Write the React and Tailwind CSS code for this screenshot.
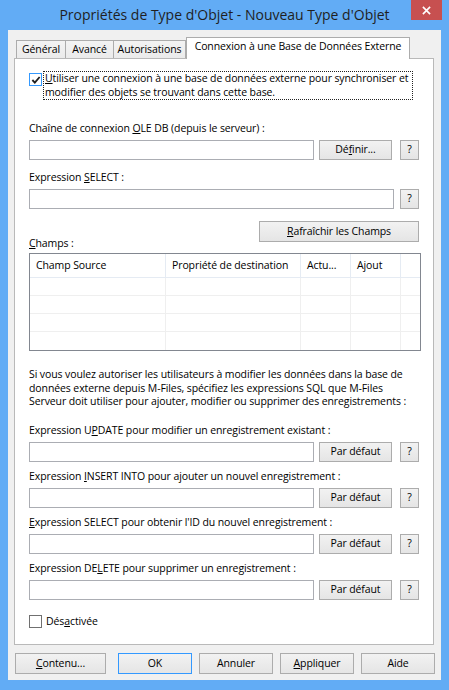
function Btn({ children, className = "" }) {
  return (
    <div
      className={`flex items-center justify-center border bg-linear-to-b from-[#f2f2f2] to-[#e5e5e5] text-black whitespace-nowrap ${className}`}
    >
      {children}
    </div>
  );
}

function Input({ className = "" }) {
  return <div className={`h-[20px] border border-[#abadb3] bg-white ${className}`} />;
}

function Label({ children, className = "" }) {
  return <div className={`h-[15px] leading-[15px] whitespace-nowrap ${className}`}>{children}</div>;
}

function SqlField({ label }) {
  return (
    <div className="mt-[7px]">
      <Label>{label}</Label>
      <div className="mt-[4px] flex">
        <Input className="w-[285px]" />
        <Btn className="ml-[5px] w-[73px] h-[20px] border-[#acacac]">Par défaut</Btn>
        <Btn className="ml-[8px] w-[19px] h-[20px] border-[#acacac]">?</Btn>
      </div>
    </div>
  );
}

function TabHead({ children, className = "" }) {
  return (
    <div
      className={`h-[18px] flex items-center justify-center border border-b-0 border-[#acacac] bg-linear-to-b from-[#f3f3f3] to-[#ebebeb] ${className}`}
    >
      {children}
    </div>
  );
}

export default function App() {
  const cols = ["Champ Source", "Propriété de destination", "Actu...", "Ajout", ""];
  const widths = ["w-[136px]", "w-[135px]", "w-[50px]", "w-[50px]", "flex-1"];

  return (
    <div className="w-[449px] h-[690px] bg-[#62acf5] flex flex-col font-['Open_Sans',sans-serif] text-[10.5px] tracking-[-0.1px] text-black">
      {/* title bar */}
      <div className="relative h-[30px] flex items-center justify-center">
        <span className="text-[14px] tracking-normal text-[#1f1f1f] -mt-[2px]">Propriétés de Type d'Objet - Nouveau Type d'Objet</span>
        <div className="absolute right-[7px] top-0 w-[31px] h-[20px] bg-[#c75050] flex items-center justify-center">
          <svg viewBox="0 0 10 10" className="w-[9px] h-[9px]">
            <path d="M1 1 L9 9 M9 1 L1 9" stroke="#fff" strokeWidth="1.8" />
          </svg>
        </div>
      </div>

      {/* client */}
      <div className="mx-[8px] h-[650px] bg-[#f0f0f0] flex flex-col pt-[8px]">
        {/* tabs */}
        <div className="flex items-end h-[20px] ml-[8px]">
          <TabHead className="w-[50px]">Général</TabHead>
          <TabHead className="w-[49px] -ml-px">Avancé</TabHead>
          <TabHead className="w-[73px] -ml-px">Autorisations</TabHead>
          <div className="relative z-10 -mb-px h-[22px] w-[224px] bg-white border border-b-0 border-[#acacac] flex items-center justify-center pb-[3px]">
            Connexion à une Base de Données Externe
          </div>
        </div>

        {/* page */}
        <div className="ml-[6px] w-[420px] h-[587px] bg-white border border-[#b9b9b9] pl-[14px] flex flex-col">
          {/* sync checkbox */}
          <div className="mt-[12px] flex items-start">
            <div className="mt-[2px] w-[13px] h-[13px] border border-[#3399ff] bg-white flex items-center justify-center">
              <svg viewBox="0 0 11 11" className="w-[10px] h-[10px]">
                <path d="M1.5 5.5 L4.2 8.3 L9.5 2.2" fill="none" stroke="#1e1e1e" strokeWidth="2" />
              </svg>
            </div>
            <div className="ml-[1px] w-[370px] border border-dotted border-[#222] px-[1px] leading-[13.5px] whitespace-nowrap">
              <u>U</u>tiliser une connexion à une base de données externe pour synchroniser et
              <br />
              modifier des objets se trouvant dans cette base.
            </div>
          </div>

          {/* OLE DB */}
          <div className="mt-[21px]">
            <Label>
              Chaîne de connexion <u>O</u>LE DB (depuis le serveur) :
            </Label>
            <div className="mt-[4px] flex">
              <Input className="w-[285px]" />
              <Btn className="ml-[5px] w-[73px] h-[20px] border-[#acacac]">
                Dé<u>f</u>inir...
              </Btn>
              <Btn className="ml-[8px] w-[19px] h-[20px] border-[#acacac]">?</Btn>
            </div>
          </div>

          {/* SELECT */}
          <div className="mt-[10px]">
            <Label>
              Expression <u>S</u>ELECT :
            </Label>
            <div className="mt-[4px] flex">
              <Input className="w-[365px]" />
              <Btn className="ml-[6px] w-[19px] h-[20px] border-[#acacac]">?</Btn>
            </div>
          </div>

          {/* refresh + champs */}
          <div className="mt-[12px] w-[390px] flex justify-end">
            <Btn className="w-[160px] h-[21px] border-[#acacac]">
              <u>R</u>afraîchir les Champs
            </Btn>
          </div>
          <Label className="-mt-[6px]">
            <u>C</u>hamps :
          </Label>

          {/* list view */}
          <div className="mt-[2px] w-[392px] h-[98px] border border-[#828790] bg-white flex flex-col">
            <div className="flex h-[24px] border-b border-[#e5ebf3]">
              {cols.map((c, i) => (
                <div
                  key={i}
                  className={`${widths[i]} h-full flex items-center pl-[6px] border-r border-[#e5ebf3] last:border-r-0 whitespace-nowrap`}
                >
                  {c}
                </div>
              ))}
            </div>
            {[0, 1, 2, 3].map((r) => (
              <div key={r} className="flex h-[18px] border-b border-[#efefef] last:border-b-0">
                {widths.map((w, i) => (
                  <div key={i} className={`${w} h-full border-r border-[#efefef] last:border-r-0`} />
                ))}
              </div>
            ))}
          </div>

          {/* explanation */}
          <div className="mt-[17px] leading-[13.7px] whitespace-nowrap">
            Si vous voulez autoriser les utilisateurs à modifier les données dans la base de
            <br />
            données externe depuis M-Files, spécifiez les expressions SQL que M-Files
            <br />
            Serveur doit utiliser pour ajouter, modifier ou supprimer des enregistrements :
          </div>

          <div className="mt-[7px]">
            <SqlField
              label={
                <>
                  Expression U<u>P</u>DATE pour modifier un enregistrement existant :
                </>
              }
            />
            <SqlField
              label={
                <>
                  Expression <u>I</u>NSERT INTO pour ajouter un nouvel enregistrement :
                </>
              }
            />
            <SqlField
              label={
                <>
                  <u>E</u>xpression SELECT pour obtenir l'ID du nouvel enregistrement :
                </>
              }
            />
            <SqlField
              label={
                <>
                  Expression DE<u>L</u>ETE pour supprimer un enregistrement :
                </>
              }
            />
          </div>

          {/* disabled */}
          <div className="mt-[14px] flex items-center">
            <div className="w-[13px] h-[13px] border border-[#707070] bg-white" />
            <span className="ml-[4px] leading-[15px]">
              Dés<u>a</u>ctivée
            </span>
          </div>
        </div>

        {/* dialog buttons */}
        <div className="mt-[8px] ml-[7px] flex">
          <Btn className="w-[91px] h-[21px] border-[#acacac]">
            <u>C</u>ontenu...
          </Btn>
          <Btn className="ml-[12px] w-[74px] h-[21px] border-[#3399ff]">OK</Btn>
          <Btn className="ml-[7px] w-[74px] h-[21px] border-[#acacac]">Annuler</Btn>
          <Btn className="ml-[7px] w-[74px] h-[21px] border-[#acacac]">
            <u>A</u>ppliquer
          </Btn>
          <Btn className="ml-[7px] w-[74px] h-[21px] border-[#acacac]">Aide</Btn>
        </div>
      </div>
    </div>
  );
}
